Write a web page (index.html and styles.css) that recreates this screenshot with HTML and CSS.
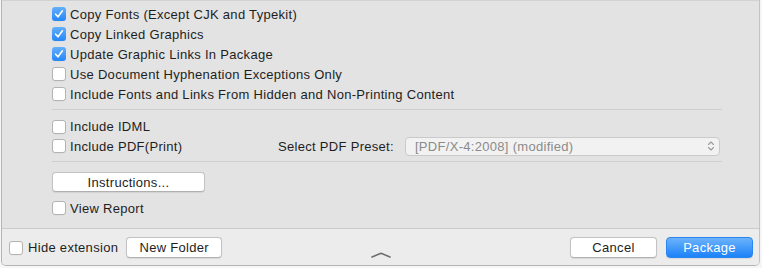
FILE: index.html
```html
<!DOCTYPE html>
<html>
<head>
<meta charset="utf-8">
<link rel="stylesheet" href="styles.css">
</head>
<body>
<div class="window">
  <div class="panel">
    <div class="opts">
      <label class="row"><span class="cb on"><svg viewBox="0 0 14 14" width="14" height="14"><path d="M3.6 7.2 L6 9.8 L10.4 3.8" fill="none" stroke="#fff" stroke-width="1.6" stroke-linecap="round" stroke-linejoin="round"/></svg></span>Copy Fonts (Except CJK and Typekit)</label>
      <label class="row"><span class="cb on"><svg viewBox="0 0 14 14" width="14" height="14"><path d="M3.6 7.2 L6 9.8 L10.4 3.8" fill="none" stroke="#fff" stroke-width="1.6" stroke-linecap="round" stroke-linejoin="round"/></svg></span>Copy Linked Graphics</label>
      <label class="row"><span class="cb on"><svg viewBox="0 0 14 14" width="14" height="14"><path d="M3.6 7.2 L6 9.8 L10.4 3.8" fill="none" stroke="#fff" stroke-width="1.6" stroke-linecap="round" stroke-linejoin="round"/></svg></span>Update Graphic Links In Package</label>
      <label class="row"><span class="cb"></span>Use Document Hyphenation Exceptions Only</label>
      <label class="row"><span class="cb"></span>Include Fonts and Links From Hidden and Non-Printing Content</label>
    </div>
    <div class="sep"></div>
    <div class="opts2">
      <label class="row"><span class="cb"></span>Include IDML</label>
      <div class="row pdfrow">
        <label class="pdfcheck"><span class="cb"></span>Include PDF(Print)</label>
        <span class="presetlabel">Select PDF Preset:</span>
        <div class="select"><span>[PDF/X-4:2008] (modified)</span><svg class="updown" viewBox="0 0 8 12" width="8" height="12"><path d="M1.5 4.5 L4 2 L6.5 4.5 M1.5 7.5 L4 10 L6.5 7.5" fill="none" stroke="#9a9a9a" stroke-width="1.1" stroke-linecap="round" stroke-linejoin="round"/></svg></div>
      </div>
    </div>
    <div class="sep sep2"></div>
    <button class="btn instr">Instructions...</button>
    <label class="row viewrep"><span class="cb"></span>View Report</label>
  </div>
  <div class="footer">
    <div class="fleft">
      <label class="row hide"><span class="cb"></span>Hide extension</label>
      <button class="btn newf">New Folder</button>
    </div>
    <div class="chev"><svg viewBox="0 0 20 6" width="20" height="6"><path d="M1 5 L10 1.2 L19 5" fill="none" stroke="#6e6e6e" stroke-width="1.6" stroke-linecap="round" stroke-linejoin="round"/></svg></div>
    <div class="fright">
      <button class="btn cancel">Cancel</button>
      <button class="btn primary">Package</button>
    </div>
  </div>
</div>
</body>
</html>
```

FILE: styles.css
```css
html, body {
  margin: 0;
  padding: 0;
  background: #f6f6f6;
}
body {
  font-family: "Liberation Sans", Arial, sans-serif;
  font-size: 13px;
  letter-spacing: 0.3px;
  color: #1e1e1e;
  width: 762px;
  height: 268px;
  overflow: hidden;
}
.window {
  margin-left: 1px;
  width: 759px;
  height: 266px;
  border-left: 1px solid #b4b4b4;
  border-right: 1px solid #c4c4c4;
  border-bottom: 1px solid #b4b4b4;
  border-radius: 0 0 5px 5px;
  box-sizing: border-box;
  overflow: hidden;
  display: flex;
  flex-direction: column;
  background: #ececec;
}
.panel {
  background: #e3e3e3;
  border-top: 1px solid #d2d2d2;
  border-bottom: 1px solid #cbcbcb;
  height: 229px;
  box-sizing: border-box;
  padding: 3px 0 0 50px;
}
.row {
  display: flex;
  align-items: center;
  gap: 4px;
  height: 20px;
  white-space: nowrap;
}
.cb {
  width: 14px;
  height: 14px;
  box-sizing: border-box;
  border: 1px solid #b3b3b3;
  border-radius: 3px;
  background: #fff;
  flex: none;
  display: block;
  box-shadow: 0 0.5px 0 rgba(0,0,0,0.05);
}
.cb svg { display: block; margin: -1px; }
.cb.on {
  border: none;
  background: linear-gradient(#64b0fb, #2486f9);
}
.cb.on svg { margin: 0; }
.sep {
  width: 670px;
  height: 1px;
  background: #cfcfcf;
  margin: 5px 0 7px;
}
.opts2 .row { height: 19.5px; }
.pdfrow { gap: 0; }
.pdfcheck {
  display: flex;
  align-items: center;
  gap: 4px;
  width: 226px;
}
.presetlabel { margin-right: 11px; }
.select {
  width: 315px;
  height: 19px;
  box-sizing: border-box;
  border: 1px solid #cacaca;
  border-radius: 4px;
  background: #f2f2f2;
  color: #8b8b8b;
  display: flex;
  align-items: center;
  justify-content: space-between;
  padding: 0 4px 0 9px;
}
.updown { display: block; }
.sep2 { margin: 5px 0 10px; }
.btn {
  font-family: inherit;
  font-size: 13px;
  letter-spacing: 0.3px;
  color: #1e1e1e;
  background: #fff;
  border: 1px solid #c3c3c3;
  border-bottom-color: #b0b0b0;
  border-radius: 4px;
  height: 21px;
  padding: 0;
  box-shadow: 0 0.5px 1px rgba(0,0,0,0.08);
  display: block;
}
.instr {
  width: 153px;
  height: 20px;
  margin-bottom: 6px;
}
.footer {
  flex: 1;
  display: grid;
  grid-template-columns: 1fr auto 1fr;
  background: #ececec;
}
.fleft {
  display: flex;
  align-items: center;
  padding: 1px 0 0 7px;
  gap: 8px;
}
.hide { gap: 5px; }
.newf { width: 96px; }
.chev {
  align-self: end;
  padding-bottom: 7px;
}
.chev svg { display: block; }
.fright {
  display: flex;
  align-items: center;
  justify-content: flex-end;
  padding: 1px 6px 0 0;
  gap: 9px;
}
.cancel { width: 87px; }
.primary {
  width: 87px;
  color: #fff;
  border: 1px solid #2a86f0;
  background: linear-gradient(#6cb3fb, #1b82f9);
}
```
